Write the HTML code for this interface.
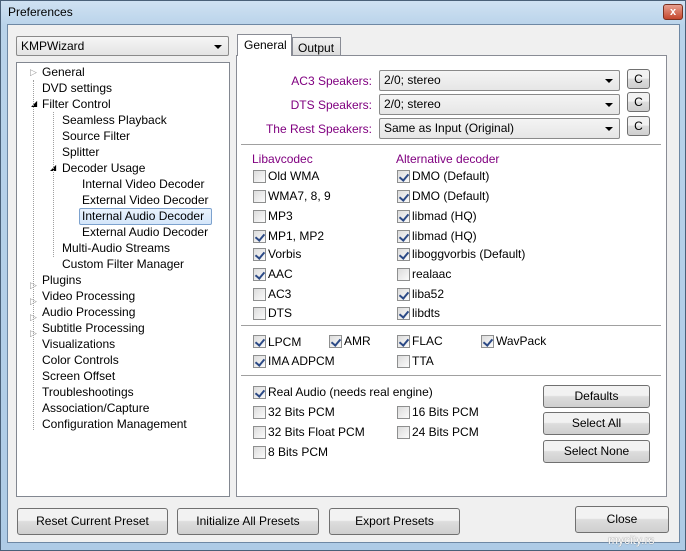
<!DOCTYPE html>
<html><head><style>
*{box-sizing:border-box;margin:0;padding:0}
body{width:686px;height:551px;overflow:hidden;background:#5a87b0;font-family:"Liberation Sans",sans-serif;font-size:12px;color:#000;position:relative}
.a{position:absolute;white-space:nowrap}
.win{left:0;top:0;width:686px;height:551px;background:linear-gradient(#cfe1f2,#b9d3ea 25px,#aecbe6);border:1px solid #4a6078}
.inner{left:7px;top:24px;width:673px;height:519px;background:#f0f0f0;border:1px solid #6e88a4}
.box{background:#fff;border:1px solid #828790}
.panel{background:#fff;border:1px solid #898c95}
.cb{position:absolute;width:13px;height:13px;border:1px solid #8e8f8f;background:linear-gradient(135deg,#dcdcdc,#fbfbfb)}
.cb.on::after{content:"";position:absolute;left:3px;top:1px;width:4px;height:7px;border:solid #2c4a86;border-width:0 2px 2px 0;transform:rotate(40deg)}
.btn{position:absolute;border:1px solid #707070;border-radius:3px;background:linear-gradient(#f2f2f2 45%,#dddddd 50%,#cfcfcf);text-align:center;font-size:12px}
.combo{position:absolute;border:1px solid #8a8a8a;border-radius:2px;background:linear-gradient(#f4f4f4,#e6e6e6);padding-left:4px;line-height:18px}
.combo::after{content:"";position:absolute;right:6px;top:8px;border:4px solid transparent;border-top:4px solid #000;border-bottom:0}
.lbl{color:#800080}
.sep{position:absolute;height:2px;border-top:1px solid #a0a0a0;border-bottom:1px solid #fff}
</style></head><body>
<div class="a win"></div>
<div class="a" style="left:8px;top:5px;font-size:12px">Preferences</div>
<div class="a" style="left:663px;top:4px;width:20px;height:16px;border:1px solid #7a3020;border-radius:3px;background:linear-gradient(#e8a090,#c4462c);color:#fff;font-weight:bold;font-size:11px;text-align:center;line-height:14px">x</div>
<div class="a inner"></div>

<div class="combo" style="left:16px;top:36px;width:213px;height:20px;background:linear-gradient(#f6f6f6,#e4e4e4)">KMPWizard</div>

<div class="a box" style="left:16px;top:62px;width:214px;height:435px"></div>
<div class="a" style="left:30px;top:67px;color:#999;font-size:9px">▷</div>
<div class="a" style="left:42px;top:65px">General</div>
<div class="a" style="left:42px;top:81px">DVD settings</div>
<div class="a" style="left:31px;top:99px;font-size:8px">◢</div>
<div class="a" style="left:42px;top:97px">Filter Control</div>
<div class="a" style="left:62px;top:113px">Seamless Playback</div>
<div class="a" style="left:62px;top:129px">Source Filter</div>
<div class="a" style="left:62px;top:145px">Splitter</div>
<div class="a" style="left:50px;top:163px;font-size:8px">◢</div>
<div class="a" style="left:62px;top:161px">Decoder Usage</div>
<div class="a" style="left:82px;top:177px">Internal Video Decoder</div>
<div class="a" style="left:82px;top:193px">External Video Decoder</div>
<div class="a" style="left:79px;top:208px;width:133px;height:17px;border:1px solid #7da2ce;background:linear-gradient(#eaf3fd,#d4e6fa);border-radius:2px"></div>
<div class="a" style="left:82px;top:209px">Internal Audio Decoder</div>
<div class="a" style="left:82px;top:225px">External Audio Decoder</div>
<div class="a" style="left:62px;top:241px">Multi-Audio Streams</div>
<div class="a" style="left:62px;top:257px">Custom Filter Manager</div>
<div class="a" style="left:42px;top:273px">Plugins</div>
<div class="a" style="left:42px;top:289px">Video Processing</div>
<div class="a" style="left:42px;top:305px">Audio Processing</div>
<div class="a" style="left:42px;top:321px">Subtitle Processing</div>
<div class="a" style="left:42px;top:337px">Visualizations</div>
<div class="a" style="left:42px;top:353px">Color Controls</div>
<div class="a" style="left:42px;top:369px">Screen Offset</div>
<div class="a" style="left:42px;top:385px">Troubleshootings</div>
<div class="a" style="left:42px;top:401px">Association/Capture</div>
<div class="a" style="left:42px;top:417px">Configuration Management</div>
<div class="a" style="left:30px;top:280px;color:#999;font-size:9px">▷</div>
<div class="a" style="left:30px;top:296px;color:#999;font-size:9px">▷</div>
<div class="a" style="left:30px;top:312px;color:#999;font-size:9px">▷</div>
<div class="a" style="left:30px;top:328px;color:#999;font-size:9px">▷</div>
<div class="a" style="left:33px;top:80px;height:350px;border-left:1px dotted #a0a0a0"></div>
<div class="a" style="left:53px;top:112px;height:145px;border-left:1px dotted #a0a0a0"></div>

<div class="a panel" style="left:236px;top:55px;width:431px;height:442px"></div>
<div class="a" style="left:292px;top:37px;width:49px;height:19px;border:1px solid #898c95;background:linear-gradient(#f2f2f2,#dcdcdc);padding:3px 0 0 5px">Output</div>
<div class="a" style="left:237px;top:34px;width:55px;height:22px;border:1px solid #898c95;border-bottom:none;background:#fff;padding:3px 0 0 6px">General</div>

<div class="a lbl" style="left:250px;top:74px;width:122px;text-align:right">AC3 Speakers:</div>
<div class="a lbl" style="left:250px;top:98px;width:122px;text-align:right">DTS Speakers:</div>
<div class="a lbl" style="left:250px;top:122px;width:122px;text-align:right">The Rest Speakers:</div>
<div class="combo" style="left:379px;top:70px;width:241px;height:21px">2/0; stereo</div>
<div class="combo" style="left:379px;top:94px;width:241px;height:21px">2/0; stereo</div>
<div class="combo" style="left:379px;top:118px;width:241px;height:21px">Same as Input (Original)</div>
<div class="btn" style="left:627px;top:69px;width:23px;height:20px;line-height:18px">C</div>
<div class="btn" style="left:627px;top:92px;width:23px;height:20px;line-height:18px">C</div>
<div class="btn" style="left:627px;top:116px;width:23px;height:20px;line-height:18px">C</div>
<div class="sep" style="left:241px;top:144px;width:420px"></div>

<div class="a lbl" style="left:252px;top:152px">Libavcodec</div>
<div class="a lbl" style="left:396px;top:152px">Alternative decoder</div>

<div class="cb" style="left:253px;top:170px"></div><div class="a" style="left:268px;top:169px">Old WMA</div>
<div class="cb" style="left:253px;top:190px"></div><div class="a" style="left:268px;top:189px">WMA7, 8, 9</div>
<div class="cb" style="left:253px;top:210px"></div><div class="a" style="left:268px;top:209px">MP3</div>
<div class="cb on" style="left:253px;top:230px"></div><div class="a" style="left:268px;top:229px">MP1, MP2</div>
<div class="cb on" style="left:253px;top:248px"></div><div class="a" style="left:268px;top:247px">Vorbis</div>
<div class="cb on" style="left:253px;top:268px"></div><div class="a" style="left:268px;top:267px">AAC</div>
<div class="cb" style="left:253px;top:288px"></div><div class="a" style="left:268px;top:287px">AC3</div>
<div class="cb" style="left:253px;top:307px"></div><div class="a" style="left:268px;top:306px">DTS</div>

<div class="cb on" style="left:397px;top:170px"></div><div class="a" style="left:412px;top:169px">DMO (Default)</div>
<div class="cb on" style="left:397px;top:190px"></div><div class="a" style="left:412px;top:189px">DMO (Default)</div>
<div class="cb on" style="left:397px;top:210px"></div><div class="a" style="left:412px;top:209px">libmad (HQ)</div>
<div class="cb on" style="left:397px;top:230px"></div><div class="a" style="left:412px;top:229px">libmad (HQ)</div>
<div class="cb on" style="left:397px;top:248px"></div><div class="a" style="left:412px;top:247px">liboggvorbis (Default)</div>
<div class="cb" style="left:397px;top:268px"></div><div class="a" style="left:412px;top:267px">realaac</div>
<div class="cb on" style="left:397px;top:288px"></div><div class="a" style="left:412px;top:287px">liba52</div>
<div class="cb on" style="left:397px;top:307px"></div><div class="a" style="left:412px;top:306px">libdts</div>

<div class="sep" style="left:241px;top:325px;width:420px"></div>
<div class="cb on" style="left:253px;top:335px"></div><div class="a" style="left:268px;top:335px">LPCM</div>
<div class="cb on" style="left:329px;top:335px"></div><div class="a" style="left:344px;top:334px">AMR</div>
<div class="cb on" style="left:397px;top:335px"></div><div class="a" style="left:412px;top:334px">FLAC</div>
<div class="cb on" style="left:481px;top:335px"></div><div class="a" style="left:496px;top:334px">WavPack</div>
<div class="cb on" style="left:253px;top:355px"></div><div class="a" style="left:268px;top:354px">IMA ADPCM</div>
<div class="cb" style="left:397px;top:355px"></div><div class="a" style="left:412px;top:354px">TTA</div>

<div class="sep" style="left:241px;top:375px;width:420px"></div>
<div class="cb on" style="left:253px;top:386px"></div><div class="a" style="left:268px;top:385px">Real Audio (needs real engine)</div>
<div class="cb" style="left:253px;top:406px"></div><div class="a" style="left:268px;top:405px">32 Bits PCM</div>
<div class="cb" style="left:397px;top:406px"></div><div class="a" style="left:412px;top:405px">16 Bits PCM</div>
<div class="cb" style="left:253px;top:426px"></div><div class="a" style="left:268px;top:425px">32 Bits Float PCM</div>
<div class="cb" style="left:397px;top:426px"></div><div class="a" style="left:412px;top:425px">24 Bits PCM</div>
<div class="cb" style="left:253px;top:446px"></div><div class="a" style="left:268px;top:445px">8 Bits PCM</div>

<div class="btn" style="left:543px;top:385px;width:107px;height:23px;line-height:21px">Defaults</div>
<div class="btn" style="left:543px;top:412px;width:107px;height:23px;line-height:21px">Select All</div>
<div class="btn" style="left:543px;top:440px;width:107px;height:23px;line-height:21px">Select None</div>

<div class="btn" style="left:17px;top:508px;width:151px;height:27px;line-height:25px">Reset Current Preset</div>
<div class="btn" style="left:177px;top:508px;width:142px;height:27px;line-height:25px">Initialize All Presets</div>
<div class="btn" style="left:329px;top:508px;width:131px;height:27px;line-height:25px">Export Presets</div>
<div class="btn" style="left:575px;top:506px;width:94px;height:27px;line-height:25px">Close</div>
<div class="a" style="left:608px;top:533px;color:#fff;font-size:12px;text-shadow:0 0 1px #555">mycity.rs</div>
</body></html>
